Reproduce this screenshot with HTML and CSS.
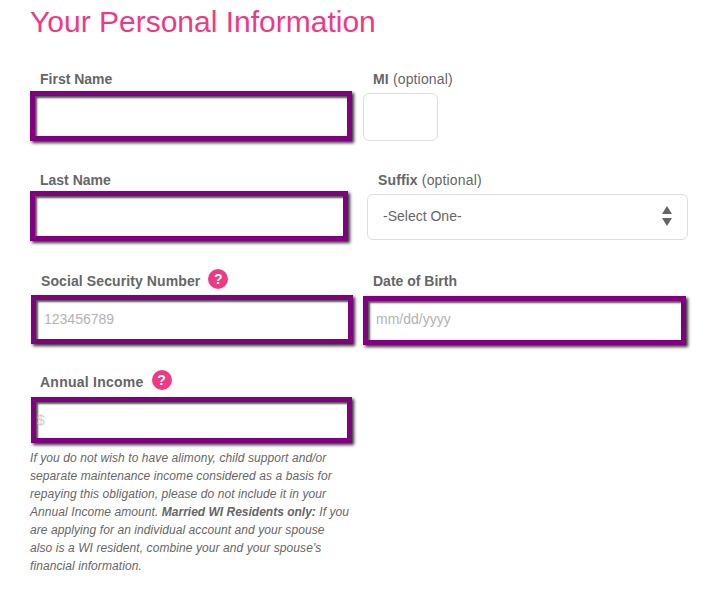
FILE: index.html
```html
<!DOCTYPE html>
<html lang="en">
<head>
    <meta charset="UTF-8">
    <title>Your Personal Information</title>
    <link rel="stylesheet" href="styles.css">
</head>
<body>
    <h1 class="page-title">Your Personal Information</h1>

    <form class="info-form">
        <div class="form-row row-name">
            <div class="field field-first">
                <label class="field-label" for="first-name">First Name</label>
                <input class="text-input highlighted" id="first-name" type="text">
            </div>
            <div class="field field-mi">
                <label class="field-label" for="mi"><span><b>MI</b> (optional)</span></label>
                <input class="text-input plain" id="mi" type="text">
            </div>
        </div>

        <div class="form-row row-last">
            <div class="field field-last">
                <label class="field-label" for="last-name">Last Name</label>
                <input class="text-input highlighted" id="last-name" type="text">
            </div>
            <div class="field field-suffix">
                <label class="field-label" for="suffix"><span><b>Suffix</b> (optional)</span></label>
                <div class="select-wrap">
                    <select class="select-input" id="suffix">
                        <option>-Select One-</option>
                    </select>
                    <svg class="select-arrows" width="10" height="20" viewBox="0 0 10 20">
                        <path d="M5 0 L10 8 L0 8 Z" />
                        <path d="M0 12 L10 12 L5 20 Z" />
                    </svg>
                </div>
            </div>
        </div>

        <div class="form-row row-ssn">
            <div class="field field-ssn">
                <label class="field-label" for="ssn">Social Security Number <span class="help-dot">?</span></label>
                <input class="text-input highlighted" id="ssn" type="text" placeholder="123456789">
            </div>
            <div class="field field-dob">
                <label class="field-label" for="dob">Date of Birth</label>
                <input class="text-input highlighted" id="dob" type="text" placeholder="mm/dd/yyyy">
            </div>
        </div>

        <div class="form-row row-income">
            <div class="field field-income">
                <label class="field-label" for="income">Annual Income <span class="help-dot">?</span></label>
                <input class="text-input highlighted" id="income" type="text" placeholder="$">
                <p class="income-note">If you do not wish to have alimony, child support and/or separate maintenance income considered as a basis for repaying this obligation, please do not include it in your Annual Income amount. <b>Married WI Residents only:</b> If you are applying for an individual account and your spouse also is a WI resident, combine your and your spouse's financial information.</p>
            </div>
        </div>
    </form>
</body>
</html>
```

FILE: styles.css
```css
* {
    margin: 0;
    padding: 0;
    box-sizing: border-box;
}
body {
    background: #ffffff;
    color: #666666;
    font-family: "Liberation Sans", Arial, sans-serif;
    padding-left: 30px;
    overflow: hidden;
}
.page-title {
    font-size: 30px;
    font-weight: normal;
    line-height: 36px;
    padding-top: 4px;
    color: #ee3a84;
}
/* Rows */
.form-row {
    display: flex;
    align-items: flex-start;
}
.row-name {
    margin-top: 30px;
}
.row-last {
    margin-top: 30px;
}
.row-ssn {
    margin-top: 31px;
}
.row-income {
    margin-top: 28px;
}
/* Fields */
.field {
    display: flex;
    flex-direction: column;
}
.field-label {
    display: flex;
    align-items: center;
    gap: 8px;
    font-size: 14px;
    font-weight: bold;
    line-height: 18px;
    height: 18px;
    padding-left: 10px;
    color: #666666;
    white-space: nowrap;
}
.field-label span {
    white-space: pre;
}
.field-mi .field-label,
.field-suffix .field-label {
    font-weight: normal;
    letter-spacing: 0.15px;
}
.field-first {
    width: 322px;
    gap: 3px;
}
.field-mi {
    width: 75px;
    margin-left: 11px;
    gap: 5px;
}
.field-last {
    width: 318px;
    gap: 2px;
}
.field-suffix {
    width: 321px;
    margin-left: 19px;
    gap: 5px;
}
.field-suffix .field-label {
    padding-left: 11px;
}
.field-ssn {
    width: 322px;
    margin-left: 1px;
    gap: 5px;
}
.field-dob {
    width: 323px;
    margin-left: 10px;
    gap: 6px;
}
.field-income {
    width: 321px;
    margin-left: 1px;
    gap: 6px;
}
.field-ssn .field-label {
    letter-spacing: 0.1px;
    padding-left: 10px;
}
.field-income .field-label {
    letter-spacing: 0.25px;
    padding-left: 9px;
}
/* Inputs */
.text-input {
    display: block;
    width: 100%;
    background: #ffffff;
    font-family: inherit;
    font-size: 14px;
    color: #666666;
    outline: none;
}
.text-input::placeholder {
    color: #b3b3b3;
    opacity: 1;
}
.highlighted {
    height: 50px;
    border: 5px solid #800080;
    padding: 0 7px;
    box-shadow: 2px 2px 3px #333333, inset 2px 2px 2px #555555;
}
.plain {
    height: 48px;
    border: 1px solid #dddddd;
    border-radius: 6px;
}
#ssn {
    height: 49px;
    padding: 0 8px 1px;
}
#dob {
    height: 49px;
    padding: 0 8px 3px;
}
#income {
    height: 46px;
    padding: 0 1px;
}
#income::placeholder {
    color: #cccccc;
}
/* Select */
.select-wrap {
    position: relative;
    height: 46px;
}
.select-input {
    display: block;
    width: 100%;
    height: 46px;
    padding: 0 15px 2px;
    appearance: none;
    background: #ffffff;
    border: 1px solid #dddddd;
    border-radius: 6px;
    font-family: inherit;
    font-size: 14px;
    color: #666666;
}
.select-arrows {
    position: absolute;
    top: 12px;
    right: 16px;
    fill: #666666;
}
/* Help badge */
.help-dot {
    flex: none;
    width: 20px;
    height: 20px;
    margin-top: -4px;
    border-radius: 50%;
    background: #ee3a84;
    color: #ffffff;
    font-size: 14px;
    line-height: 20px;
    text-align: center;
    letter-spacing: 0;
}
/* Note under income */
.income-note {
    width: 319.5px;
    margin-left: -1px;
    font-size: 12px;
    font-style: italic;
    line-height: 18px;
    letter-spacing: 0.08px;
    color: #666666;
}
.income-note b {
    letter-spacing: 0;
}
```
